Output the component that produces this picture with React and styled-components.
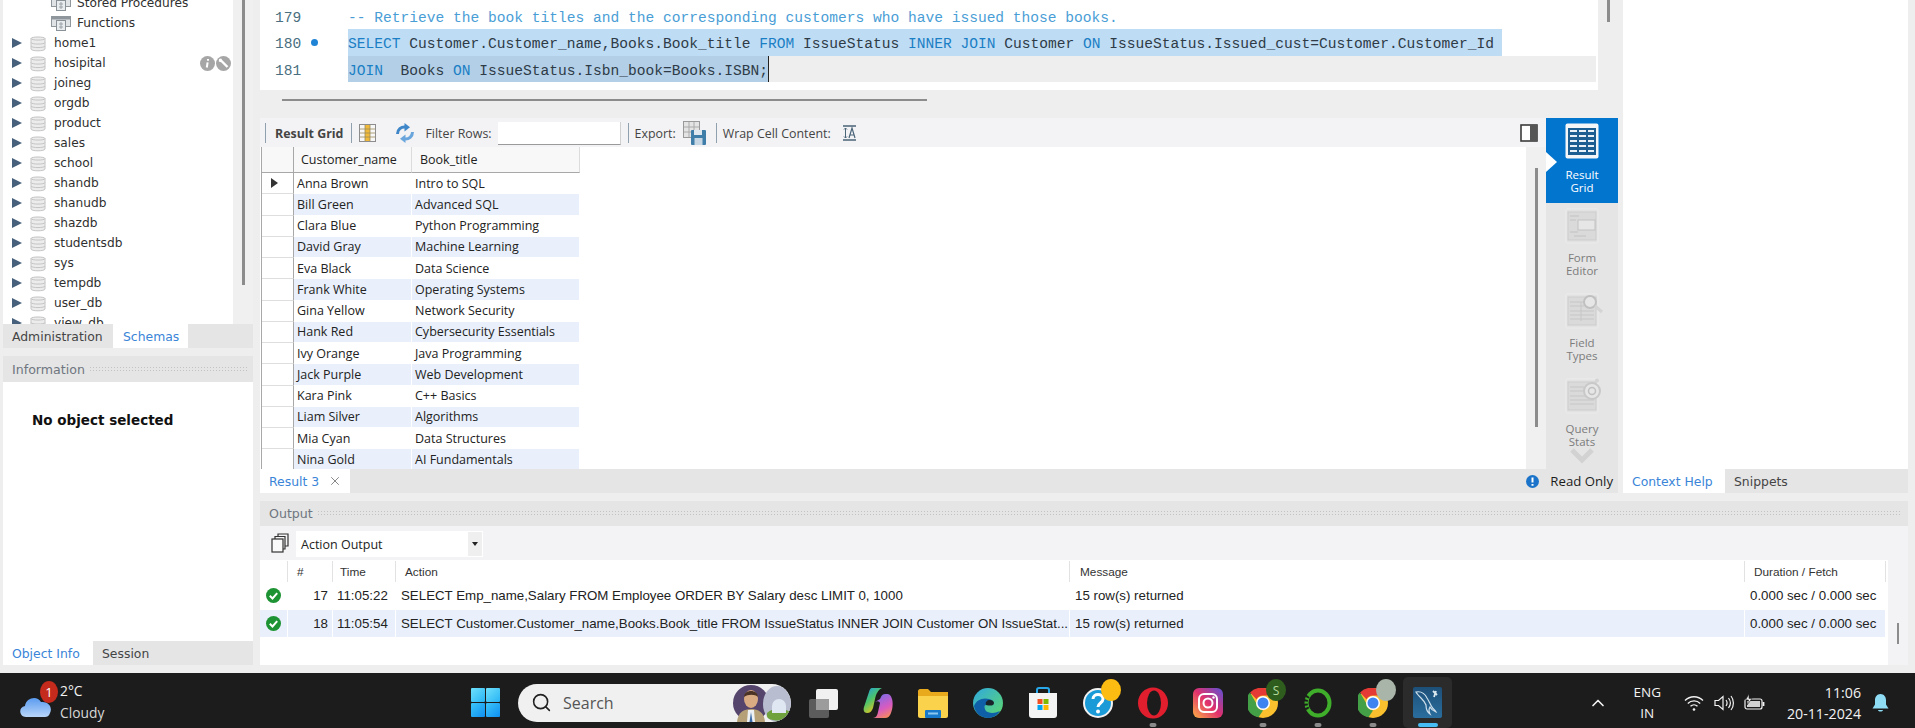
import React from "react";
import styled, { createGlobalStyle } from "styled-components";
import { ChevronUp, Search as SearchIcon, X } from "lucide-react";

const GlobalStyle = createGlobalStyle`
	html, body {
		margin: 0;
		padding: 0;
		background: #eeeeef;
		overflow: hidden;
	}
	* {
		box-sizing: border-box;
	}
`;

const UI_FONT = `"DejaVu Sans", sans-serif`;
const GRID_FONT = `"Open Sans", "Noto Sans", sans-serif`;
const LOG_FONT = `"Liberation Sans", sans-serif`;
const MONO_FONT = `"Liberation Mono", monospace`;
const WIN_FONT = `"Open Sans", sans-serif`;

const schemas = ["home1", "hosipital", "joineg", "orgdb", "product", "sales", "school", "shandb", "shanudb", "shazdb", "studentsdb", "sys", "tempdb", "user_db", "view_db"];

const results = [
	["Anna Brown", "Intro to SQL"],
	["Bill Green", "Advanced SQL"],
	["Clara Blue", "Python Programming"],
	["David Gray", "Machine Learning"],
	["Eva Black", "Data Science"],
	["Frank White", "Operating Systems"],
	["Gina Yellow", "Network Security"],
	["Hank Red", "Cybersecurity Essentials"],
	["Ivy Orange", "Java Programming"],
	["Jack Purple", "Web Development"],
	["Kara Pink", "C++ Basics"],
	["Liam Silver", "Algorithms"],
	["Mia Cyan", "Data Structures"],
	["Nina Gold", "AI Fundamentals"],
];

const actions = [
	{ id: 17, time: "11:05:22", action: "SELECT Emp_name,Salary FROM Employee ORDER BY Salary desc LIMIT 0, 1000" },
	{ id: 18, time: "11:05:54", action: "SELECT Customer.Customer_name,Books.Book_title FROM IssueStatus INNER JOIN Customer ON IssueStat..." },
];

const DbIcon = () => (
	<svg width="16" height="17" viewBox="0 0 16 17">
		<path d="M1 3.5C1 1.5 15 1.5 15 3.5V14C15 16.4 1 16.4 1 14Z" fill="#ececec" stroke="#c4c4c4" />
		<path d="M1 3.5C1 5.6 15 5.6 15 3.5M1 7.5C1 9.6 15 9.6 15 7.5M1 11C1 13.1 15 13.1 15 11" fill="none" stroke="#c4c4c4" />
	</svg>
);

const FolderGridIcon = () => (
	<svg width="20" height="15" viewBox="0 0 20 15">
		<rect x="0.5" y="0.5" width="19" height="10" fill="#dfe3e6" stroke="#8f979d" />
		<rect x="0.5" y="0.5" width="19" height="3" fill="#8f979d" />
		<rect x="5.5" y="4.5" width="9" height="10" fill="#e9ecee" stroke="#8a9298" />
		<path d="M8 8h4M8 11h4M10 6v7" stroke="#9aa2a8" />
	</svg>
);

const InfoBadge = () => (
	<svg width="15" height="15" viewBox="0 0 15 15">
		<circle cx="7.5" cy="7.5" r="7.5" fill="#a6a6a6" />
		<path d="M8 3v1.8M7.6 6.3 6.8 11.5" stroke="#fff" strokeWidth="2" />
	</svg>
);

const WrenchBadge = () => (
	<svg width="15" height="15" viewBox="0 0 15 15">
		<circle cx="7.5" cy="7.5" r="7.5" fill="#a6a6a6" />
		<path d="M4 3.5 11.5 11" stroke="#fff" strokeWidth="2.4" />
		<path d="M2.8 5.5 3 3l2.2-.6 1 2.4-1.6 1.4Z" fill="#fff" />
	</svg>
);

const ColumnsIcon = () => (
	<svg width="17" height="18" viewBox="0 0 17 18">
		<rect x="0.5" y="0.5" width="16" height="17" fill="#f7f7f7" stroke="#8d8d8d" />
		<rect x="6" y="1" width="5" height="16" fill="#f0b93a" />
		<path d="M6 1v16M11 1v16M1 5h15M1 9h15M1 13h15" stroke="#9a8a5a" strokeWidth="0.8" />
	</svg>
);

const RefreshIcon = () => (
	<svg width="20" height="20" viewBox="0 0 20 20" fill="none" strokeWidth="3">
		<path d="M2.500 11C2.500 6.500 6 3.500 10.500 4" stroke="#3f86c9" />
		<path d="M9.500 0 15 4.200 9.500 8.500Z" fill="#3f86c9" />
		<path d="M17.500 9C17.500 13.500 14 16.500 9.500 16" stroke="#6aa5dc" />
		<path d="M10.500 20 5 15.800 10.500 11.500Z" fill="#6aa5dc" />
	</svg>
);

const ExportIcon = () => (
	<svg width="23" height="24" viewBox="0 0 23 24">
		<rect x="0.5" y="0.5" width="16" height="16" fill="#e4e4e4" stroke="#999" />
		<path d="M6 1v15M11 1v15M1 6h15M1 11h15" stroke="#aaa" />
		<rect x="8" y="9" width="15" height="15" rx="1" fill="#3f7ea8" />
		<rect x="11" y="9" width="8" height="5" fill="#dfe8ee" />
		<rect x="11.5" y="17" width="8" height="7" fill="#c7d8e4" />
	</svg>
);

const WrapIcon = () => (
	<svg width="15" height="16" viewBox="0 0 15 16">
		<path d="M1 1h13M1 15h13" stroke="#4a6478" strokeWidth="1.4" />
		<path d="M3.5 3v10M2 4.5 3.5 3 5 4.5M2 11.500 3.500 13 5 11.500" stroke="#4a6478" fill="none" />
		<path d="M7 13 10 3l3 10M8 10h4" stroke="#4a6478" fill="none" strokeWidth="1.2" />
	</svg>
);

const PanelToggle = () => (
	<svg width="18" height="18" viewBox="0 0 18 18">
		<rect x="1" y="1" width="16" height="16" fill="#fff" stroke="#3b3b3b" strokeWidth="1.6" />
		<rect x="10" y="1" width="7" height="16" fill="#555" />
	</svg>
);

const ResultGridIcon = () => (
	<svg width="34" height="36" viewBox="0 0 34 36">
		<rect x="0.5" y="0.5" width="33" height="35" rx="2" fill="#f4f6f8" />
		<rect x="3" y="5" width="28" height="27" fill="#1c5d92" />
		{[8, 13, 18, 23, 28].map((y) => (
			<path key={y} d={`M5 ${y}h7M14 ${y}h7M23 ${y}h6`} stroke="#e9f1f8" strokeWidth="2" />
		))}
	</svg>
);

const SheetSvg = styled.svg`
	margin-left: 6px;
`;

const SheetIcon = ({ children }) => (
	<SheetSvg width="40" height="36" viewBox="0 0 40 36" fill="none">
		<rect x="1" y="1" width="32" height="34" rx="1" fill="#e2e2e2" stroke="#ececec" />
		<rect x="3" y="4" width="28" height="28" fill="#dadada" stroke="#cdcdcd" />
		{children}
	</SheetSvg>
);

const FormIcon = () => (
	<SheetIcon>
		<path d="M5 8h9M5 12h6M5 24h8M9 28h12" stroke="#c2c2c2" />
		<rect x="13" y="12" width="17" height="10" stroke="#c2c2c2" fill="#e6e6e6" />
	</SheetIcon>
);

const FieldIcon = () => (
	<SheetIcon>
		<path d="M5 9h14M5 13h14M5 18h24M5 22h24M5 26h24M16 9v19" stroke="#c6c6c6" />
		<circle cx="25" cy="9" r="6" fill="#e6e6e6" stroke="#c0c0c0" strokeWidth="2" />
		<path d="M30 13l7 6" stroke="#d4d4d4" strokeWidth="3" />
	</SheetIcon>
);

const StatsIcon = () => (
	<SheetIcon>
		<path d="M5 9h14M5 13h14M5 18h16M5 22h24M5 26h24" stroke="#c6c6c6" />
		<circle cx="27" cy="13" r="8" fill="#e6e6e6" stroke="#c8c8c8" strokeWidth="2" />
		<circle cx="27" cy="13" r="3.500" stroke="#c0c0c0" strokeWidth="1.500" />
		<circle cx="32" cy="2.500" r="2" fill="#d4d4d4" />
	</SheetIcon>
);

const CopiesIcon = () => (
	<svg width="18" height="20" viewBox="0 0 18 20" fill="none" stroke="#333" strokeWidth="1.2">
		<rect x="1" y="6" width="11" height="13" fill="#fafafa" />
		<path d="M4 6V3.500h10V16h-2M7 3.500V1h10v12h-3" />
	</svg>
);

const OkIcon = () => (
	<svg width="15" height="15" viewBox="0 0 15 15">
		<circle cx="7.5" cy="7.5" r="7.5" fill="#1e9334" />
		<path d="M3.800 7.800 6.500 10.500 11.200 5.200" fill="none" stroke="#fff" strokeWidth="2" />
	</svg>
);

const ReadOnlyIcon = () => (
	<svg width="13" height="13" viewBox="0 0 13 13">
		<circle cx="6.500" cy="6.500" r="6.500" fill="#1b74c9" />
		<path d="M6.500 2.500v5M6.500 9v1.800" stroke="#fff" strokeWidth="2" />
	</svg>
);

const CloudIcon = () => (
	<svg width="31" height="24" viewBox="0 0 31 24">
		<defs>
			<linearGradient id="cloudFill" x1="0" y1="0" x2="0" y2="1">
				<stop offset="0" stopColor="#5a9bf0" />
				<stop offset="1" stopColor="#b9d5f8" />
			</linearGradient>
		</defs>
		<path d="M6 24C-1 24-2 14 5 13 6 5 17 2 21 9 28 8 33 14 30 20 29 23 27 24 25 24Z" fill="url(#cloudFill)" />
	</svg>
);

const WindowsLogo = () => (
	<svg width="29" height="29" viewBox="0 0 29 29">
		<defs>
			<linearGradient id="winTop" x1="0" y1="0" x2="1" y2="1">
				<stop offset="0" stopColor="#6fe0fb" />
				<stop offset="1" stopColor="#27b4f5" />
			</linearGradient>
			<linearGradient id="winBottom" x1="0" y1="0" x2="1" y2="1">
				<stop offset="0" stopColor="#3bc6fa" />
				<stop offset="1" stopColor="#0f8ff0" />
			</linearGradient>
		</defs>
		<rect width="14" height="14" rx="1" fill="url(#winTop)" />
		<rect x="15" width="14" height="14" rx="1" fill="url(#winTop)" />
		<rect y="15" width="14" height="14" rx="1" fill="url(#winBottom)" />
		<rect x="15" y="15" width="14" height="14" rx="1" fill="url(#winBottom)" />
	</svg>
);

const Doodle = () => (
	<svg width="64" height="38" viewBox="0 0 64 38">
		<circle cx="24" cy="19" r="18" fill="#55446c" />
		<ellipse cx="50" cy="20" rx="14" ry="18" fill="#b9bdd0" />
		<path d="M40 29c6-6 18-6 24 0v3c-3 6-24 6-24 0Z" fill="#6fa13c" />
		<path d="M45 22a7 7 0 0 1 14 0v7H45Z" fill="#dfe7f2" />
		<path d="M10 38c1-10 7-13 14-13s13 3 14 13Z" fill="#b5a078" />
		<path d="M21 26h6l1 12h-8Z" fill="#eef1f4" />
		<path d="M24 28l-1.500 10h3Z" fill="#3a69a8" />
		<ellipse cx="24" cy="15" rx="7" ry="9" fill="#d9ab82" />
		<path d="M17 13c0-8 14-8 14 0-3-3-10-3-14 0Z" fill="#4b3326" />
	</svg>
);

const TaskViewIcon = () => (
	<svg width="30" height="30" viewBox="0 0 30 30">
		<rect x="1" y="11" width="20" height="19" rx="2" fill="#5c5c5c" />
		<rect x="8" y="1" width="22" height="21" rx="2" fill="#f1f1f1" />
		<rect x="8" y="11" width="13" height="11" fill="#9c9c9c" />
	</svg>
);

const CopilotIcon = () => (
	<svg width="30" height="32" viewBox="0 0 30 32">
		<defs>
			<linearGradient id="copA" x1="0" y1="0" x2="0.6" y2="1">
				<stop offset="0" stopColor="#1f9ee8" />
				<stop offset="0.5" stopColor="#4cc46c" />
				<stop offset="1" stopColor="#f5c518" />
			</linearGradient>
			<linearGradient id="copB" x1="0.3" y1="0" x2="0.7" y2="1">
				<stop offset="0" stopColor="#7c6be8" />
				<stop offset="0.6" stopColor="#d85bc0" />
				<stop offset="1" stopColor="#f58a5c" />
			</linearGradient>
		</defs>
		<path d="M9 1h10c-4 2-6 6-7 11l-2 9c-1 3-3 5-6 5-3 0-4-3-3-6L6 5c.5-2 1.500-4 3-4Z" fill="url(#copA)" />
		<path d="M12 15c3-2 5 0 5 1l-2 9c-.5 3-2 6-5 6h12c3 0 5-2 6-5 2-5 2-11 1-14-1-4-3-5-5-5h-2c-3 0-4 3-5 5Z" fill="url(#copB)" />
	</svg>
);

const ExplorerIcon = () => (
	<svg width="30" height="30" viewBox="0 0 30 30">
		<path d="M0 3c0-1 1-2 2-2h8l3 3h17v24H0Z" fill="#e9a91c" />
		<path d="M0 8h30v20c0 1-1 2-2 2H2c-1 0-2-1-2-2Z" fill="#fbd24b" />
		<rect x="7" y="22" width="16" height="8" rx="1" fill="#1878c9" />
		<rect x="10" y="24.500" width="10" height="2" fill="#8cc7f0" />
	</svg>
);

const EdgeIcon = () => (
	<svg width="30" height="30" viewBox="0 0 30 30">
		<defs>
			<linearGradient id="edgeTop" x1="0" y1="0" x2="1" y2="1">
				<stop offset="0" stopColor="#2fa8e0" />
				<stop offset="1" stopColor="#5fd96a" />
			</linearGradient>
		</defs>
		<circle cx="15" cy="15" r="15" fill="url(#edgeTop)" />
		<path d="M1 18c2-6 9-9 15-7 5 1 6 6 2 6h-5c-2 0-2 3 0 6 2 2 8 3 14 0-3 5-8 7-12 7C8 30 2 25 1 18Z" fill="#0f5fa8" />
		<path d="M13 17c4 1 8 1 8-2 0-2-2-3-4-3-3 0-5 2-4 5Z" fill="#1b1b1b" opacity="0.9" />
	</svg>
);

const StoreIcon = () => (
	<svg width="30" height="32" viewBox="0 0 30 32">
		<path d="M9 7V3c0-1 1-2 2-2h8c1 0 2 1 2 2v4" fill="none" stroke="#28a8ea" strokeWidth="2" />
		<path d="M1 6h28v22c0 2-1 3-3 3H4c-2 0-3-1-3-3Z" fill="#f4f4f4" />
		<rect x="9.500" y="12" width="5" height="5" fill="#f25022" />
		<rect x="15.500" y="12" width="5" height="5" fill="#7fba00" />
		<rect x="9.500" y="18" width="5" height="5" fill="#00a4ef" />
		<rect x="15.500" y="18" width="5" height="5" fill="#ffb900" />
	</svg>
);

const HelpIcon = () => (
	<svg width="30" height="32" viewBox="0 0 30 32">
		<circle cx="15" cy="16" r="14" fill="#1a9ad6" stroke="#f1f1f1" strokeWidth="2" />
		<path d="M10 12c0-6 10-6 10 0 0 4-5 4-5 8" fill="none" stroke="#fff" strokeWidth="3" />
		<circle cx="15" cy="24.500" r="2" fill="#fff" />
	</svg>
);

const OperaIcon = () => (
	<svg width="30" height="32" viewBox="0 0 30 32">
		<ellipse cx="15" cy="16" rx="15" ry="15.500" fill="#e01e2e" />
		<ellipse cx="16" cy="16" rx="7" ry="12.500" fill="#1c1c1c" />
	</svg>
);

const InstagramIcon = () => (
	<svg width="30" height="30" viewBox="0 0 30 30">
		<defs>
			<linearGradient id="insta" x1="0" y1="1" x2="1" y2="0">
				<stop offset="0" stopColor="#fcb045" />
				<stop offset="0.5" stopColor="#e1306c" />
				<stop offset="1" stopColor="#5b51d8" />
			</linearGradient>
		</defs>
		<rect width="30" height="30" rx="6" fill="url(#insta)" />
		<rect x="6" y="6" width="18" height="18" rx="5" fill="none" stroke="#fff" strokeWidth="2" />
		<circle cx="15" cy="15" r="4.500" fill="none" stroke="#fff" strokeWidth="2" />
		<circle cx="20.500" cy="9.500" r="1.200" fill="#fff" />
	</svg>
);

const ChromeIcon = () => (
	<svg width="30" height="30" viewBox="0 0 30 30">
		<circle cx="15" cy="15" r="15" fill="#fbc02d" />
		<path d="M15 0a15 15 0 0 1 13 7.500H15a7.500 7.500 0 0 0-6.500 3.750L2 4.500A15 15 0 0 1 15 0Z" fill="#e53935" />
		<path d="M2 4.500l6.500 11.250A7.500 7.500 0 0 0 15 22.500L10.500 29.300A15 15 0 0 1 2 4.500Z" fill="#43a047" />
		<circle cx="15" cy="15" r="7" fill="#fff" />
		<circle cx="15" cy="15" r="5.500" fill="#3f83f1" />
	</svg>
);

const RingIcon = () => (
	<svg width="28" height="30" viewBox="0 0 28 30">
		<ellipse cx="14" cy="15" rx="11.500" ry="12.500" fill="none" stroke="#3fae2a" strokeWidth="4" />
		<path d="M4 8 A12 12 0 0 0 4 22" fill="none" stroke="#1c1c1c" strokeWidth="4" strokeDasharray="2 2" />
	</svg>
);

const MysqlIcon = () => (
	<svg width="29" height="31" viewBox="0 0 29 31">
		<defs>
			<linearGradient id="mysqlBg" x1="0" y1="0" x2="0" y2="1">
				<stop offset="0" stopColor="#1d4f78" />
				<stop offset="1" stopColor="#2a6e9e" />
			</linearGradient>
		</defs>
		<rect width="29" height="31" rx="2" fill="url(#mysqlBg)" />
		<path d="M3 5c5-1 9 2 11 6 2 3 3 6 5 9 1 2 3 3 4 5-3-1-5-3-6-5-2 3-1 5 0 7-3-2-4-5-4-9-1-3-3-5-5-7C6 9 4 7 3 5Z" fill="none" stroke="#cfe0ec" strokeWidth="1.200" />
		<path d="M20 4l4 4M23 4l-2 6" stroke="#dce8f0" strokeWidth="1.800" />
	</svg>
);

const WifiIcon = () => (
	<svg width="20" height="18" viewBox="0 0 20 18" fill="none" stroke="#f2f2f2" strokeWidth="1.300">
		<path d="M1 6.500c5-5 13-5 18 0M3.800 9.500c3.500-3.500 9-3.500 12.400 0M6.500 12.300c2-2 5-2 7 0" />
		<circle cx="10" cy="15.500" r="1.300" fill="#f2f2f2" stroke="none" />
	</svg>
);

const SpeakerIcon = () => (
	<svg width="21" height="18" viewBox="0 0 21 18" fill="none" stroke="#f2f2f2" strokeWidth="1.200">
		<path d="M1 6.500h3.500L9 2.500v13l-4.500-4H1Z" />
		<path d="M12 6c1.300 1.800 1.300 4.200 0 6M14.500 4c2.300 3 2.300 7 0 10M17 2c3.200 4 3.200 10 0 14" />
	</svg>
);

const BatteryIcon = () => (
	<svg width="21" height="18" viewBox="0 0 21 18" fill="none" stroke="#f2f2f2" strokeWidth="1.200">
		<rect x="1" y="5" width="17" height="10" rx="2" />
		<path d="M19.500 8v4" strokeWidth="1.800" />
		<rect x="3" y="7" width="13" height="6" fill="#f2f2f2" stroke="none" opacity="0.85" />
		<path d="M5 0 1.500 6h3L3 11 8 4.500H5Z" fill="#f2f2f2" stroke="#1c1c1c" strokeWidth="0.600" />
	</svg>
);

const BellIcon = () => (
	<svg width="17" height="20" viewBox="0 0 17 20">
		<path d="M8.500 1C5 1 3 4 3 7v4.500L.5 15.500h16L14 11.500V7c0-3-2-6-5.500-6Z" fill="#8fdcf5" />
		<path d="M6 17c.5 2 4.500 2 5 0Z" fill="#8fdcf5" />
	</svg>
);

const Screen = styled.div`
	display: flex;
	flex-direction: column;
	width: 1915px;
	height: 728px;
	overflow: hidden;
`;

const Workspace = styled.div`
	display: flex;
	height: 673px;
	padding-left: 3px;
	gap: 7px;
	background: #eeeeef;
`;

const Sidebar = styled.aside`
	display: flex;
	flex-direction: column;
	width: 250px;
	height: 665px;
`;

const TreeArea = styled.div`
	display: flex;
	height: 324px;
	background: #f0f0f1;
`;

const TreeList = styled.div`
	width: 230px;
	height: 324px;
	overflow: hidden;
	background: #fff;
`;

const TreeScroll = styled.div`
	margin-top: -7px;
`;

const TreeRow = styled.div`
	display: flex;
	align-items: center;
	height: 20px;
	padding-left: ${(p) => (p.$child ? "48px" : "9px")};
	font: 12.200px ${UI_FONT};
	color: #2f2f2f;
	position: relative;
`;

const Triangle = styled.span`
	width: 0;
	height: 0;
	margin-right: 8px;
	border-left: 10px solid #47607c;
	border-top: 5.5px solid transparent;
	border-bottom: 5.5px solid transparent;
`;

const TreeIcon = styled.span`
	display: flex;
	width: ${(p) => (p.$child ? "26px" : "24px")};
`;

const RowBadges = styled.span`
	position: absolute;
	right: 2px;
	top: 3px;
	display: flex;
	gap: 1px;
`;

const TreeGutter = styled.div`
	width: 20px;
	padding-left: 9px;
`;

const VThumb = styled.div`
	width: ${(p) => p.$w || 3}px;
	height: ${(p) => p.$h}px;
	margin-top: ${(p) => p.$top || 0}px;
	background: #8c8c8c;
`;

const TabStrip = styled.div`
	display: flex;
	align-items: stretch;
	flex: none;
	height: 24px;
	background: #e5e5e5;
`;

const Tab = styled.div`
	display: flex;
	align-items: center;
	gap: 9px;
	width: ${(p) => p.$w}px;
	padding-left: ${(p) => p.$pad ?? 9}px;
	font: 12.400px ${UI_FONT};
	color: ${(p) => (p.$active ? "#3a85d8" : "#444")};
	background: ${(p) => (p.$active ? "#fff" : "transparent")};
`;

const PaneHeader = styled.div`
	display: flex;
	align-items: center;
	gap: 4px;
	flex: none;
	height: 26px;
	margin-top: 8px;
	padding: 0 6px 0 9px;
	font: 12.600px ${UI_FONT};
	color: #6f7680;
	background: #e5e5e5;
`;

const Dots = styled.span`
	flex: 1;
	height: 7px;
	background-image: radial-gradient(#c3c3c3 0.7px, transparent 0.8px);
	background-size: 3px 3px;
`;

const InfoBody = styled.div`
	flex: 1;
	padding: 30px 29px;
	font: bold 13.500px ${UI_FONT};
	color: #111;
	background: #fff;
`;

const Main = styled.main`
	display: flex;
	flex-direction: column;
	width: 1648px;
	height: 665px;
`;

const TopRow = styled.div`
	display: flex;
	gap: 5px;
	height: 493px;
`;

const QueryColumn = styled.section`
	display: flex;
	flex-direction: column;
	width: 1358px;
`;

const EditorRow = styled.div`
	display: flex;
	height: 90px;
`;

const Editor = styled.div`
	width: 1338px;
	padding: 3px 2px 0 0;
	background: #fff;
`;

const CodeLine = styled.div`
	display: flex;
	height: 26.300px;
	font: 14.580px/31px ${MONO_FONT};
	white-space: pre;
	color: #2e3b46;
`;

const LineNo = styled.span`
	position: relative;
	flex: none;
	width: 88px;
	padding-left: 15px;
	color: #4a6f80;
`;

const BreakDot = styled.span`
	position: absolute;
	left: 51px;
	top: 10px;
	width: 7px;
	height: 7px;
	border-radius: 50%;
	background: #1f84d6;
`;

const Code = styled.span`
	flex: 1;
	height: 26.300px;
	background: ${(p) => (p.$current ? "#eeeeee" : "transparent")};
`;

const Selected = styled.span`
	display: inline-block;
	height: 26.300px;
	vertical-align: top;
	padding-right: ${(p) => p.$pad || 0}px;
	background: ${(p) => p.$bg};
	border-right: ${(p) => (p.$caret ? "1.500px solid #222" : "none")};
`;

const Keyword = styled.span`
	color: #1a7fc4;
`;

const Comment = styled.span`
	color: #4a9ed6;
`;

const EditorGutter = styled.div`
	width: 20px;
	padding-left: 9px;
`;

const SplitRow = styled.div`
	height: 28px;
	padding: 9px 0 0 22px;
`;

const HThumb = styled.div`
	width: 645px;
	height: 2px;
	background: #8c8c8c;
`;

const ResultRow = styled.div`
	display: flex;
	height: 351px;
`;

const ResultMain = styled.div`
	display: flex;
	flex-direction: column;
	width: 1286px;
`;

const Toolbar = styled.div`
	display: flex;
	align-items: center;
	height: 29px;
	padding: 1px 0 0 5px;
	background: #f3f3f5;
	font: 12.400px ${GRID_FONT};
	color: #444;
`;

const Sep = styled.span`
	width: 1px;
	height: 20px;
	margin: ${(p) => p.$margin};
	background: #8fa0ae;
`;

const ToolText = styled.span`
	margin: ${(p) => p.$margin || 0};
	font-weight: ${(p) => (p.$bold ? 700 : 400)};
	white-space: nowrap;
`;

const FilterInput = styled.span`
	width: 123px;
	height: 23px;
	margin-left: 6px;
	background: #fff;
	border-bottom: 1px solid #9a9a9a;
	border-right: 1px solid #d0d0d0;
`;

const ToolIcon = styled.span`
	display: flex;
	margin: ${(p) => p.$margin};
`;

const TogglePlace = styled.span`
	display: flex;
	margin-left: auto;
	margin-right: 8px;
`;

const GridBody = styled.div`
	display: flex;
	height: 322px;
`;

const GridArea = styled.div`
	width: 1266px;
	overflow: hidden;
	background: #fff;
`;

const GridGutter = styled.div`
	width: 20px;
	padding-left: 9px;
	background: #f0f0f1;
`;

const DataGrid = styled.div`
	display: grid;
	grid-template-columns: 32px 118px 168px;
	grid-template-rows: 26px;
	grid-auto-rows: 21.250px;
	width: 320px;
	margin-left: 1px;
	font: 12.500px ${GRID_FONT};
	color: #222;
	border-left: 1px solid #a8a8a8;
`;

const HeadCell = styled.div`
	display: flex;
	align-items: center;
	padding-left: ${(p) => p.$pad || 0}px;
	background: #f8f8f8;
	border-bottom: 1.500px solid #a8a8a8;
	border-right: 1px solid ${(p) => (p.$strong ? "#a8a8a8" : "#dcdcdc")};
`;

const MarkerCell = styled.div`
	display: flex;
	align-items: center;
	padding-left: 9px;
	border-bottom: 1px solid #dedede;
	border-right: 1px solid #a8a8a8;
`;

const DataCell = styled.div`
	display: flex;
	align-items: center;
	margin: 0 1px 1px 0;
	padding-left: 3px;
	white-space: nowrap;
	background: ${(p) => (p.$alt ? "#e9f0fb" : "#fff")};
`;

const SmallArrow = styled.span`
	width: 0;
	height: 0;
	border-left: 7px solid #333;
	border-top: 5px solid transparent;
	border-bottom: 5px solid transparent;
`;

const SideRail = styled.nav`
	position: relative;
	width: 72px;
	height: 351px;
	background: #e5e5e5;
`;

const SideTab = styled.div`
	position: relative;
	display: flex;
	flex-direction: column;
	align-items: center;
	height: 85px;
	padding-top: 5px;
	font: 11.500px/13px ${GRID_FONT};
	text-align: center;
	color: ${(p) => (p.$active ? "#fff" : "#7c7c7c")};
	background: ${(p) => (p.$active ? "#0275cf" : "transparent")};
	&::before {
		content: "";
		display: ${(p) => (p.$active ? "block" : "none")};
		position: absolute;
		left: 0;
		top: 34px;
		border-left: 11px solid #fff;
		border-top: 10px solid transparent;
		border-bottom: 10px solid transparent;
	}
`;

const SideLabel = styled.span`
	margin-top: ${(p) => p.$gap}px;
`;

const RailChevron = styled.svg`
	position: absolute;
	left: 24px;
	top: 330px;
`;

const ResultTabs = styled(TabStrip)`
	align-items: stretch;
`;

const CloseX = styled.span`
	display: flex;
	color: #777;
`;

const ReadOnly = styled.div`
	display: flex;
	align-items: center;
	gap: 11px;
	margin-left: auto;
	padding-right: 5px;
	font: 13.200px ${GRID_FONT};
	color: #1c1c1c;
`;

const HelpColumn = styled.section`
	display: flex;
	flex-direction: column;
	width: 285px;
`;

const HelpBody = styled.div`
	height: 469px;
	background: #fff;
`;

const OutputHeader = styled(PaneHeader)`
	height: 25px;
`;

const OutputBar = styled.div`
	display: flex;
	align-items: center;
	height: 34px;
	padding-left: 11px;
	background: #f3f3f5;
`;

const OutputSelect = styled.div`
	display: flex;
	align-items: center;
	justify-content: space-between;
	width: 187px;
	height: 26px;
	margin: 2px 0 0 7px;
	padding: 0 1px 0 5px;
	font: 12.500px ${GRID_FONT};
	color: #222;
	background: #fff;
`;

const SelectArrow = styled.span`
	display: flex;
	align-items: center;
	justify-content: center;
	width: 14px;
	height: 24px;
	background: #efefef;
	&::after {
		content: "";
		border-top: 4px solid #222;
		border-left: 3px solid transparent;
		border-right: 3px solid transparent;
	}
`;

const OutputBody = styled.div`
	display: flex;
	height: 105px;
	background: #fff;
`;

const LogTable = styled.div`
	width: 1628px;
	padding-top: 1px;
`;

const LogGutter = styled.div`
	width: 20px;
	padding: 63px 0 0 9px;
	background: #f3f3f5;
`;

const LogRow = styled.div`
	display: grid;
	grid-template-columns: 28px 45px 63px 674px 675px 141px;
	height: ${(p) => p.$h}px;
	margin-bottom: ${(p) => p.$mb || 0}px;
`;

const LogHead = styled.div`
	display: flex;
	align-items: center;
	padding-left: ${(p) => p.$pad || 6}px;
	font: 11.800px ${LOG_FONT};
	color: #333;
	border-right: 1px solid #e2e2e2;
`;

const LogCell = styled.div`
	display: flex;
	align-items: center;
	justify-content: ${(p) => (p.$end ? "flex-end" : "flex-start")};
	margin-right: 1px;
	padding: 0 ${(p) => (p.$end ? 4 : 0)}px 0 ${(p) => p.$pad ?? 5}px;
	font: 13.300px ${LOG_FONT};
	color: #222;
	white-space: nowrap;
	overflow: hidden;
	background: ${(p) => (p.$alt ? "#e9f0fb" : "#fff")};
`;

const Taskbar = styled.footer`
	display: flex;
	align-items: center;
	height: 55px;
	padding-top: 4px;
	background: #1c1c1c;
	color: #f2f2f2;
	font-family: ${WIN_FONT};
`;

const Weather = styled.div`
	display: flex;
	align-items: center;
	width: 471px;
	padding: 4px 0 0 20px;
`;

const CloudWrap = styled.span`
	position: relative;
	display: flex;
	margin-right: 9px;
`;

const Badge = styled.span`
	position: absolute;
	right: -7px;
	top: -12px;
	display: flex;
	align-items: center;
	justify-content: center;
	width: 18px;
	height: 22px;
	border-radius: 50%;
	font-size: 13px;
	color: #fff;
	background: #c42b1c;
`;

const WeatherText = styled.div`
	font-size: 13.800px;
	line-height: 21.500px;
	margin-top: -6px;
`;

const Muted = styled.div`
	color: #d8d8d8;
`;

const SearchPill = styled.div`
	display: flex;
	align-items: center;
	width: 273px;
	height: 38px;
	margin: 0 4px 0 18px;
	padding-left: 13px;
	border-radius: 19px;
	font-size: 16px;
	color: #555;
	background: #f0f0f0;
	overflow: hidden;
`;

const SearchText = styled.span`
	margin-left: 11px;
`;

const DoodleSlot = styled.span`
	display: flex;
	margin-left: auto;
`;

const TaskApps = styled.div`
	display: flex;
	align-items: center;
`;

const TaskSlot = styled.div`
	position: relative;
	display: flex;
	align-items: center;
	justify-content: center;
	width: ${(p) => (p.$open ? "49px" : "55px")};
	height: 51px;
	margin: ${(p) => (p.$open ? "0 3px" : "0")};
	border-radius: 5px;
	background: ${(p) => (p.$open ? "#2b2b2b" : "transparent")};
	&::after {
		content: "";
		display: ${(p) => (p.$dot ? "block" : "none")};
		position: absolute;
		left: 50%;
		bottom: 1px;
		transform: translateX(-50%);
		width: ${(p) => (p.$open ? "20px" : "7px")};
		height: 4px;
		border-radius: 2px;
		background: ${(p) => (p.$open ? "#47bdf5" : "#8a8a8a")};
	}
`;

const AppBadge = styled.span`
	position: absolute;
	left: 31px;
	top: 2px;
	display: flex;
	align-items: center;
	justify-content: center;
	width: 20px;
	height: 22px;
	border-radius: 50%;
	font-size: 12px;
	color: #b5d99c;
	background: ${(p) => p.$bg};
`;

const Tray = styled.div`
	display: flex;
	align-items: center;
	margin-left: auto;
	height: 100%;
`;

const TrayIcon = styled.span`
	display: flex;
	margin: ${(p) => p.$margin};
`;

const LangBlock = styled.div`
	margin-left: 26px;
	font-size: 13.500px;
	line-height: 21px;
	text-align: center;
`;

const Clock = styled.div`
	width: 82px;
	margin-left: 14px;
	font-size: 14.200px;
	line-height: 21px;
	text-align: right;
	white-space: nowrap;
`;

const App = () => (
	<Screen>
		<GlobalStyle />
		<Workspace>
			<Sidebar>
				<TreeArea>
					<TreeList>
						<TreeScroll>
							<TreeRow $child><TreeIcon $child><FolderGridIcon /></TreeIcon>Stored Procedures</TreeRow>
							<TreeRow $child><TreeIcon $child><FolderGridIcon /></TreeIcon>Functions</TreeRow>
							{schemas.map((name) => (
								<TreeRow key={name}>
									<Triangle />
									<TreeIcon><DbIcon /></TreeIcon>
									{name}
									{name === "hosipital" && (
										<RowBadges><InfoBadge /><WrenchBadge /></RowBadges>
									)}
								</TreeRow>
							))}
						</TreeScroll>
					</TreeList>
					<TreeGutter><VThumb $h={285} /></TreeGutter>
				</TreeArea>
				<TabStrip>
					<Tab $w={110} $pad={9}>Administration</Tab>
					<Tab $w={75} $pad={10} $active>Schemas</Tab>
				</TabStrip>
				<PaneHeader>Information<Dots /></PaneHeader>
				<InfoBody>No object selected</InfoBody>
				<TabStrip>
					<Tab $w={90} $pad={9} $active>Object Info</Tab>
					<Tab $w={100} $pad={9}>Session</Tab>
				</TabStrip>
			</Sidebar>
			<Main>
				<TopRow>
					<QueryColumn>
						<EditorRow>
							<Editor>
								<CodeLine>
									<LineNo>179</LineNo>
									<Code><Comment>-- Retrieve the book titles and the corresponding customers who have issued those books.</Comment></Code>
								</CodeLine>
								<CodeLine>
									<LineNo>180<BreakDot /></LineNo>
									<Code>
										<Selected $bg="#bfdcf5" $pad={8}>
											<Keyword>SELECT</Keyword> Customer.Customer_name,Books.Book_title <Keyword>FROM</Keyword> IssueStatus <Keyword>INNER JOIN</Keyword> Customer <Keyword>ON</Keyword> IssueStatus.Issued_cust=Customer.Customer_Id
										</Selected>
									</Code>
								</CodeLine>
								<CodeLine>
									<LineNo>181</LineNo>
									<Code $current>
										<Selected $bg="#b3cfe8" $caret>
											<Keyword>JOIN</Keyword>  Books <Keyword>ON</Keyword> IssueStatus.Isbn_book=Books.ISBN;
										</Selected>
									</Code>
								</CodeLine>
							</Editor>
							<EditorGutter><VThumb $h={22} /></EditorGutter>
						</EditorRow>
						<SplitRow><HThumb /></SplitRow>
						<ResultRow>
							<ResultMain>
								<Toolbar>
									<Sep $margin="0 9px 0 0" />
									<ToolText $bold>Result Grid</ToolText>
									<Sep $margin="0 7px 0 8px" />
									<ToolIcon $margin="0 19px 0 0"><ColumnsIcon /></ToolIcon>
									<ToolIcon $margin="0 10px 0 0"><RefreshIcon /></ToolIcon>
									<ToolText>Filter Rows:</ToolText>
									<FilterInput />
									<Sep $margin="0 6px 0 7px" />
									<ToolText>Export:</ToolText>
									<ToolIcon $margin="0 10px 0 7px"><ExportIcon /></ToolIcon>
									<Sep $margin="0 6px 0 0" />
									<ToolText>Wrap Cell Content:</ToolText>
									<ToolIcon $margin="0 0 0 11px"><WrapIcon /></ToolIcon>
									<TogglePlace><PanelToggle /></TogglePlace>
								</Toolbar>
								<GridBody>
									<GridArea>
										<DataGrid>
											<HeadCell $strong />
											<HeadCell $pad={7}>Customer_name</HeadCell>
											<HeadCell $pad={8}>Book_title</HeadCell>
											{results.map(([customer, book], i) => (
												<React.Fragment key={customer}>
													<MarkerCell>{i === 0 && <SmallArrow />}</MarkerCell>
													<DataCell $alt={i % 2 === 1}>{customer}</DataCell>
													<DataCell $alt={i % 2 === 1}>{book}</DataCell>
												</React.Fragment>
											))}
										</DataGrid>
									</GridArea>
									<GridGutter><VThumb $h={259} $top={21} /></GridGutter>
								</GridBody>
							</ResultMain>
							<SideRail>
								<SideTab $active>
									<ResultGridIcon />
									<SideLabel $gap={9}>Result<br />Grid</SideLabel>
								</SideTab>
								<SideTab>
									<FormIcon />
									<SideLabel $gap={7}>Form<br />Editor</SideLabel>
								</SideTab>
								<SideTab>
									<FieldIcon />
									<SideLabel $gap={7}>Field<br />Types</SideLabel>
								</SideTab>
								<SideTab>
									<StatsIcon />
									<SideLabel $gap={8}>Query<br />Stats</SideLabel>
								</SideTab>
								<RailChevron width="24" height="16" viewBox="0 0 24 16">
									<path d="M2 2 12 12 22 2" fill="none" stroke="#d2d2d2" strokeWidth="5" />
								</RailChevron>
							</SideRail>
						</ResultRow>
						<ResultTabs>
							<Tab $w={90} $pad={9} $active>
								Result 3
								<CloseX><X size={14} strokeWidth={1.5} /></CloseX>
							</Tab>
							<ReadOnly><ReadOnlyIcon />Read Only</ReadOnly>
						</ResultTabs>
					</QueryColumn>
					<HelpColumn>
						<HelpBody />
						<TabStrip>
							<Tab $w={102} $pad={9} $active>Context Help</Tab>
							<Tab $w={100} $pad={9}>Snippets</Tab>
						</TabStrip>
					</HelpColumn>
				</TopRow>
				<OutputHeader>Output<Dots /></OutputHeader>
				<OutputBar>
					<CopiesIcon />
					<OutputSelect>Action Output<SelectArrow /></OutputSelect>
				</OutputBar>
				<OutputBody>
					<LogTable>
						<LogRow $h={21}>
							<LogHead />
							<LogHead $pad={9}>#</LogHead>
							<LogHead $pad={7}>Time</LogHead>
							<LogHead $pad={9}>Action</LogHead>
							<LogHead $pad={10}>Message</LogHead>
							<LogHead $pad={9}>Duration / Fetch</LogHead>
						</LogRow>
						{actions.map((row, i) => (
							<LogRow key={row.id} $h={27} $mb={1}>
								<LogCell $alt={i === 1} $pad={6}><OkIcon /></LogCell>
								<LogCell $alt={i === 1} $end>{row.id}</LogCell>
								<LogCell $alt={i === 1} $pad={4}>{row.time}</LogCell>
								<LogCell $alt={i === 1}>{row.action}</LogCell>
								<LogCell $alt={i === 1}>15 row(s) returned</LogCell>
								<LogCell $alt={i === 1}>0.000 sec / 0.000 sec</LogCell>
							</LogRow>
						))}
					</LogTable>
					<LogGutter><VThumb $h={21} $w={2} /></LogGutter>
				</OutputBody>
			</Main>
		</Workspace>
		<Taskbar>
			<Weather>
				<CloudWrap><CloudIcon /><Badge>1</Badge></CloudWrap>
				<WeatherText>
					<div>2°C</div>
					<Muted>Cloudy</Muted>
				</WeatherText>
			</Weather>
			<WindowsLogo />
			<SearchPill>
				<SearchIcon size={21} strokeWidth={1.8} color="#222" />
				<SearchText>Search</SearchText>
				<DoodleSlot><Doodle /></DoodleSlot>
			</SearchPill>
			<TaskApps>
				<TaskSlot><TaskViewIcon /></TaskSlot>
				<TaskSlot><CopilotIcon /></TaskSlot>
				<TaskSlot><ExplorerIcon /></TaskSlot>
				<TaskSlot><EdgeIcon /></TaskSlot>
				<TaskSlot><StoreIcon /></TaskSlot>
				<TaskSlot><HelpIcon /><AppBadge $bg="#fdbc11" /></TaskSlot>
				<TaskSlot $dot><OperaIcon /></TaskSlot>
				<TaskSlot><InstagramIcon /></TaskSlot>
				<TaskSlot $dot><ChromeIcon /><AppBadge $bg="#2e5d1e">S</AppBadge></TaskSlot>
				<TaskSlot $dot><RingIcon /></TaskSlot>
				<TaskSlot $dot><ChromeIcon /><AppBadge $bg="#a9b5a8" /></TaskSlot>
				<TaskSlot $dot $open><MysqlIcon /></TaskSlot>
			</TaskApps>
			<Tray>
				<ChevronUp size={20} strokeWidth={2} />
				<LangBlock>ENG<br />IN</LangBlock>
				<TrayIcon $margin="0 0 0 23px"><WifiIcon /></TrayIcon>
				<TrayIcon $margin="0 0 0 10px"><SpeakerIcon /></TrayIcon>
				<TrayIcon $margin="0 0 0 9px"><BatteryIcon /></TrayIcon>
				<Clock>11:06<br />20-11-2024</Clock>
				<TrayIcon $margin="0 26px 0 11px"><BellIcon /></TrayIcon>
			</Tray>
		</Taskbar>
	</Screen>
);

export default App;
